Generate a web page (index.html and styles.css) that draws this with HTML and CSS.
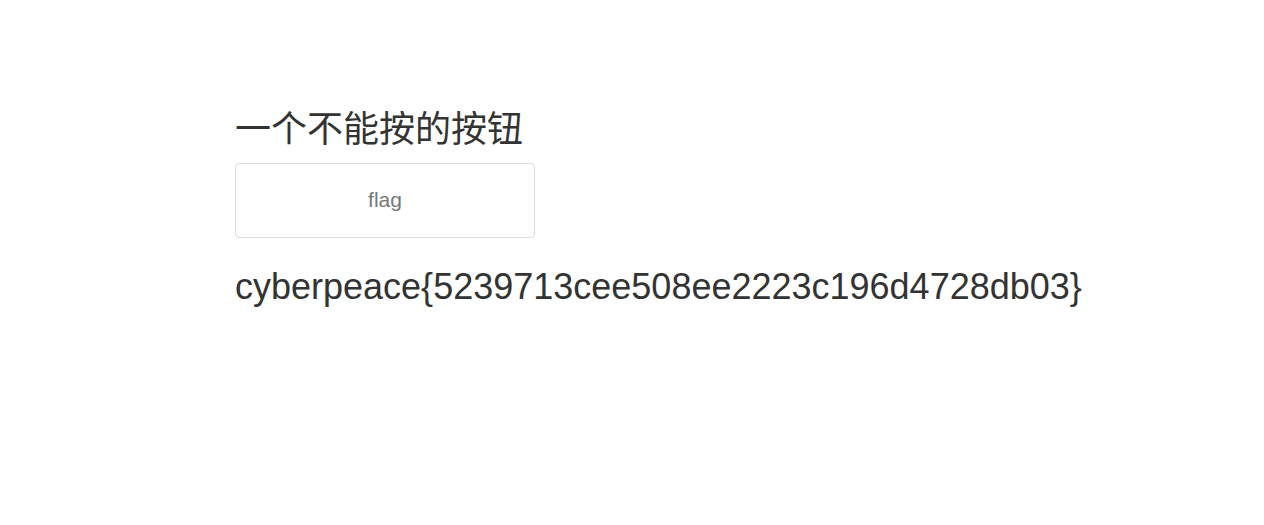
FILE: index.html
```html
<!DOCTYPE html>
<html>
<head>
<meta charset="utf-8">
<link rel="stylesheet" href="styles.css">
</head>
<body>
<div class="container">
  <h1 class="title">一个不能按的按钮</h1>
  <button class="btn" disabled>flag</button>
  <h2 class="flag">cyberpeace{5239713cee508ee2223c196d4728db03}</h2>
</div>
</body>
</html>
```
FILE: styles.css
```css
html, body {
  margin: 0;
  padding: 0;
  background: #fff;
}
body {
  font-family: "Liberation Sans", Arial, "Noto Sans CJK SC", sans-serif;
  color: #333;
}
.container {
  padding: 110px 0 0 235px;
  display: flex;
  flex-direction: column;
  align-items: flex-start;
}
.title {
  margin: 0 0 13px 0;
  font-size: 36px;
  font-weight: normal;
  line-height: 40px;
  font-family: "Liberation Sans", "Noto Sans CJK SC", sans-serif;
}
.btn {
  width: 300px;
  height: 75px;
  background: #fff;
  border: 1px solid #ddd;
  border-radius: 4px;
  color: #777;
  font-family: "Liberation Sans", Arial, sans-serif;
  font-size: 21px;
  line-height: 1;
  padding: 0 0 2px 0;
}
.flag {
  margin: 29px 0 0 0;
  font-size: 36px;
  font-weight: normal;
  line-height: 40px;
}
```
